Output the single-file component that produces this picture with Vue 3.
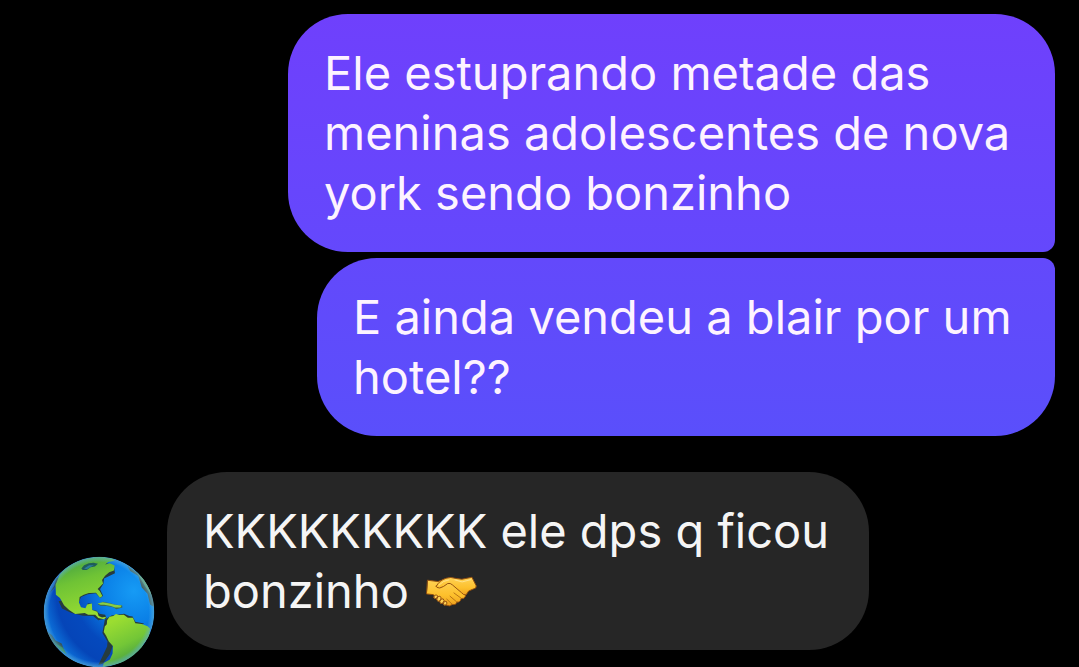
<script setup>
const sent = [
  { id: 1, size: 'wide', lines: ['Ele estuprando metade das', 'meninas adolescentes de nova', 'york sendo bonzinho'] },
  { id: 2, size: 'medium', lines: ['E ainda vendeu a blair por um', 'hotel??'] },
]
</script>

<template>
  <main class="chat">
    <section class="sent">
      <p v-for="m in sent" :key="m.id" class="bubble" :class="m.size">
        <span v-for="line in m.lines" :key="line" class="line">{{ line }}</span>
      </p>
    </section>
    <section class="received">
      <svg class="avatar" viewBox="42 37 330 330" role="img" aria-label="Globe">
        <defs>
          <radialGradient id="sea" gradientUnits="userSpaceOnUse" cx="310" cy="140" r="270">
            <stop offset="0" stop-color="#169bf5" />
            <stop offset="0.35" stop-color="#0a7fe6" />
            <stop offset="0.65" stop-color="#0549bd" />
            <stop offset="0.85" stop-color="#0545b8" />
            <stop offset="1" stop-color="#0c6fd8" />
          </radialGradient>
          <linearGradient id="north" x1="0.2" y1="0" x2="0.5" y2="1">
            <stop offset="0" stop-color="#3f9d45" />
            <stop offset="0.4" stop-color="#6fc335" />
            <stop offset="1" stop-color="#9ade32" />
          </linearGradient>
          <linearGradient id="south" x1="0.3" y1="0.1" x2="0.7" y2="1">
            <stop offset="0" stop-color="#9bdd31" />
            <stop offset="0.5" stop-color="#73c637" />
            <stop offset="1" stop-color="#358f46" />
          </linearGradient>
          <radialGradient id="rim">
            <stop offset="0.9" stop-color="#5cb8ea" stop-opacity="0" />
            <stop offset="1" stop-color="#65aecb" stop-opacity="0.65" />
          </radialGradient>
          <clipPath id="disc"><circle cx="207" cy="202" r="163" /></clipPath>
        </defs>
        <g clip-path="url(#disc)">
          <circle cx="207" cy="202" r="163" fill="url(#sea)" />
          <g fill="#273c3d">
            <path d="M82 101 L75 125 L62 145 L76 130 L90 105Z" />
            <path d="M88 170 L98 192 L126 205 L160 213 L190 214 L205 226 L230 221 L225 210 L208 207 L200 198 L187 196 L185 178 L174 176 L169 193 L154 191 L147 174 L154 158 L174 150 L197 147 L211 161 L219 154 L210 135 L220 119 L222 103 L254 88 L251 66 L225 57 L150 155Z" />
            <path d="M224 225 L244 212 L281 207 L296 214 L306 215 L314 231 L340 236 L280 270 L248 300 L239 326 L219 354 L205 358 L216 335 L231 304 L232 289 L217 264Z" />
            <path d="M290 65 L322 88 L347 115 L371 162 L370 187 L358 181 L350 148 L333 130 L323 96 L299 81Z" fill="#49615b" />
            <path d="M52 258 L68 270 L79 286 L97 295 L107 321 L84 307 L65 287Z" fill="#35555b" />
          </g>
          <path fill="url(#north)" d="M79 122 L91 92 C115 62 157 40 215 39 L249 45 L253 51 L234 55 L225 62 L239 58 L253 65 L251 80 L237 85 L225 95 L216 108 L219 118 L203 134 L209 140 L217 155 L210 160 L198 145 L177 146 L162 151 L150 158 L148 174 L154 188 L167 191 L172 180 L186 177 L187 196 L202 201 L206 214 L216 218 L229 216 L222 223 L205 220 L196 210 L175 210 L165 205 L137 208 L119 196 L104 182 L92 161 L80 151Z" />
          <path d="M155 74 L163 64 L177 58 L191 57 L204 60 L195 68 L182 70 L171 78 L159 78Z" fill="#205d59" />
          <path d="M163 74 L178 64 L192 64 L181 70 L171 76Z" fill="#2a7c9b" />
          <path d="M203 179 L219 172 L240 176 L255 181 L275 182 L276 189 L258 194 L249 188 L229 184 L212 184Z" fill="#376859" />
          <path d="M203 177 L218 173 L239 177 L254 181 L274 183 L270 189 L254 189 L242 184 L222 181 L212 181Z" fill="#8ace43" />
          <path fill="url(#south)" d="M231 226 L238 216 L249 214 L257 208 L266 211 L280 210 L292 219 L307 219 L314 235 L333 237 L350 244 L358 251 L354 275 L338 297 L330 316 L317 326 L290 347 L256 357 L218 364 L221 352 L239 342 L247 324 L248 302 L236 289 L228 272 L221 261 L224 245 L230 238Z" />
          <path d="M64 278 L83 297 L101 307 L112 327 L93 315Z" fill="#378c52" />
          <path d="M319 86 L340 105 L357 137 L363 155 L343 126Z" fill="#71a35b" />
          <circle cx="207" cy="202" r="163" fill="url(#rim)" />
        </g>
      </svg>
      <p class="bubble grey">
        <span class="line">KKKKKKKKK ele dps q ficou</span>
        <span class="line">bonzinho
          <svg class="handshake" viewBox="46 48 158 98" role="img" aria-label="Handshake">
            <defs>
              <linearGradient id="skin" x1="0" y1="0" x2="0" y2="1">
                <stop offset="0" stop-color="#ffd256" />
                <stop offset="0.6" stop-color="#fdc02c" />
                <stop offset="1" stop-color="#eda01e" />
              </linearGradient>
            </defs>
            <g stroke="#93500f" stroke-width="3" stroke-linejoin="round" stroke-linecap="round">
              <path fill="url(#skin)" d="M51 61 L82 65 L105 57 L128 64 L160 93 Q169 102 166 110 Q164 119 153 117 Q151 129 140 128 Q137 138 126 135 Q118 143 107 137 L92 125 L67 105 L48 103Z" />
              <path fill="url(#skin)" d="M77 79 Q87 61 107 55 Q122 50 134 55 L155 58 L186 52 L199 78 Q201 86 190 88 L176 94 L168 106 Q160 107 154 99 L126 75 Q120 69 112 71 L99 80 Q86 88 79 83 Q77 81 77 79Z" />
              <path fill="#ffd255" d="M69 113 Q70 104 78 106 Q84 108 78 116 Q72 121 69 113Z" />
              <path fill="#ffd255" d="M78 120 Q80 108 88 110 Q95 113 88 124 Q81 130 78 120Z" />
              <path fill="#ffd255" d="M87 126 Q92 115 98 118 Q104 122 97 131 Q89 137 87 126Z" />
              <path fill="#ffd255" d="M98 132 Q103 121 108 126 Q112 131 106 137 Q100 141 98 132Z" />
              <path fill="none" d="M131 100 L153 116 M119 110 L139 127 M109 119 L125 134" stroke="#b77314" />
            </g>
            <path d="M85 76 Q98 61 115 60 M134 60 L156 66 L183 59" fill="none" stroke="#ffe38c" stroke-width="3" stroke-linecap="round" />
          </svg>
        </span>
      </p>
    </section>
  </main>
</template>

<style>
body {
  margin: 0;
  background: #000;
}
</style>

<style scoped>
.chat {
  box-sizing: border-box;
  min-height: 100vh;
  padding: 14px 24px 0;
  display: flex;
  flex-direction: column;
  gap: 36px;
  overflow: hidden;
  background: #000;
  font-family: Inter, "Noto Sans", sans-serif;
  font-size: 47px;
  line-height: 60px;
}
.sent {
  display: flex;
  flex-direction: column;
  align-items: flex-end;
  gap: 6px;
}
.bubble {
  box-sizing: border-box;
  max-width: 100%;
  margin: 0;
  padding: 29px 36px;
  border-radius: 60px;
  color: #fdf3ff;
}
.line {
  display: block;
  white-space: nowrap;
}
.wide {
  width: 767px;
  border-bottom-right-radius: 12px;
  background: linear-gradient(#6f40fc, #6448fc);
}
.medium {
  width: 738px;
  border-top-right-radius: 12px;
  background: linear-gradient(#6349fb, #5a4ffb);
}
.received {
  display: flex;
  align-items: flex-end;
  gap: 12px;
  padding-left: 19px;
}
.avatar {
  flex: none;
  width: 112px;
  height: 112px;
}
.grey {
  width: 702px;
  margin-bottom: 18px;
  background: #262626;
  color: #f5f5f5;
}
.handshake {
  width: 52px;
  height: 32px;
  margin-left: 4px;
  vertical-align: 0;
}
</style>
